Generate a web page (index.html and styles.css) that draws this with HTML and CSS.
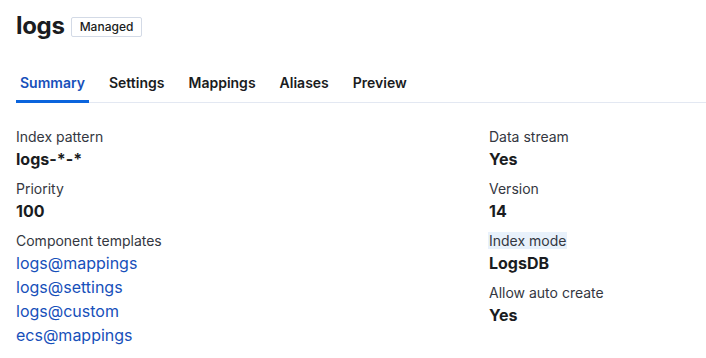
FILE: index.html
```html
<!DOCTYPE html>
<html lang="en">
<head>
    <meta charset="UTF-8">
    <meta name="viewport" content="width=device-width, initial-scale=1.0">
    <title>logs - Index template</title>
    <link rel="stylesheet" href="styles.css">
</head>
<body>
    <div class="page">
        <div class="header">
            <h1 class="title">logs</h1>
            <span class="badge">Managed</span>
        </div>

        <div class="tabs">
            <button class="tab active">Summary</button>
            <button class="tab">Settings</button>
            <button class="tab">Mappings</button>
            <button class="tab">Aliases</button>
            <button class="tab">Preview</button>
        </div>

        <div class="summary">
            <dl class="details">
                <dt>Index pattern</dt>
                <dd>logs-*-*</dd>
                <dt>Priority</dt>
                <dd>100</dd>
                <dt>Component templates</dt>
                <dd class="links">
                    <a href="#">logs@mappings</a>
                    <a href="#">logs@settings</a>
                    <a href="#">logs@custom</a>
                    <a href="#">ecs@mappings</a>
                </dd>
            </dl>
            <dl class="details">
                <dt>Data stream</dt>
                <dd>Yes</dd>
                <dt>Version</dt>
                <dd>14</dd>
                <dt><span class="highlight">Index mode</span></dt>
                <dd>LogsDB</dd>
                <dt>Allow auto create</dt>
                <dd>Yes</dd>
            </dl>
        </div>
    </div>
</body>
</html>
```

FILE: styles.css
```css
body {
    margin: 0;
    padding: 0;
    background-color: #fff;
    font-family: Inter, "Noto Sans", sans-serif;
    color: #1a1c21;
}

.page {
    padding: 8px 0 0 16px;
}

.header {
    display: flex;
    align-items: center;
    gap: 6px;
    height: 36px;
}

.title {
    margin: 0;
    font-size: 24px;
    font-weight: 700;
    line-height: 36px;
    letter-spacing: -0.3px;
}

.badge {
    display: inline-block;
    height: 20px;
    line-height: 18px;
    padding: 0 8px;
    border: 1px solid #d3dae6;
    border-radius: 2px;
    font-size: 12px;
    font-weight: 500;
    box-sizing: border-box;
    margin-top: 2px;
}

.tabs {
    display: flex;
    gap: 16px;
    margin-top: 18px;
    border-bottom: 1px solid #e3e8f2;
}

.tab {
    height: 40px;
    padding: 0 4px;
    border: none;
    background: none;
    font-family: inherit;
    font-size: 14px;
    font-weight: 600;
    color: #1a1c21;
    cursor: pointer;
    position: relative;
}

.tab.active {
    color: #1750ba;
}

.tab.active::after {
    content: "";
    position: absolute;
    left: 0;
    right: 0;
    bottom: -1px;
    height: 3px;
    background-color: #0b64dd;
}

.summary {
    display: grid;
    grid-template-columns: 473px 1fr;
    padding-top: 24px;
}

.details {
    margin: 0;
}

.details dt {
    font-size: 14px;
    line-height: 20px;
    color: #343741;
}

.details dd {
    margin: 0 0 8px 0;
    font-size: 16px;
    line-height: 24px;
    font-weight: 700;
}

.details dd.links {
    display: flex;
    flex-direction: column;
    font-weight: 400;
}

.links a {
    color: #1750ba;
    text-decoration: none;
}

.highlight {
    background-color: #e8f1fb;
    margin-left: -1px;
    padding: 0 1px;
}
```
